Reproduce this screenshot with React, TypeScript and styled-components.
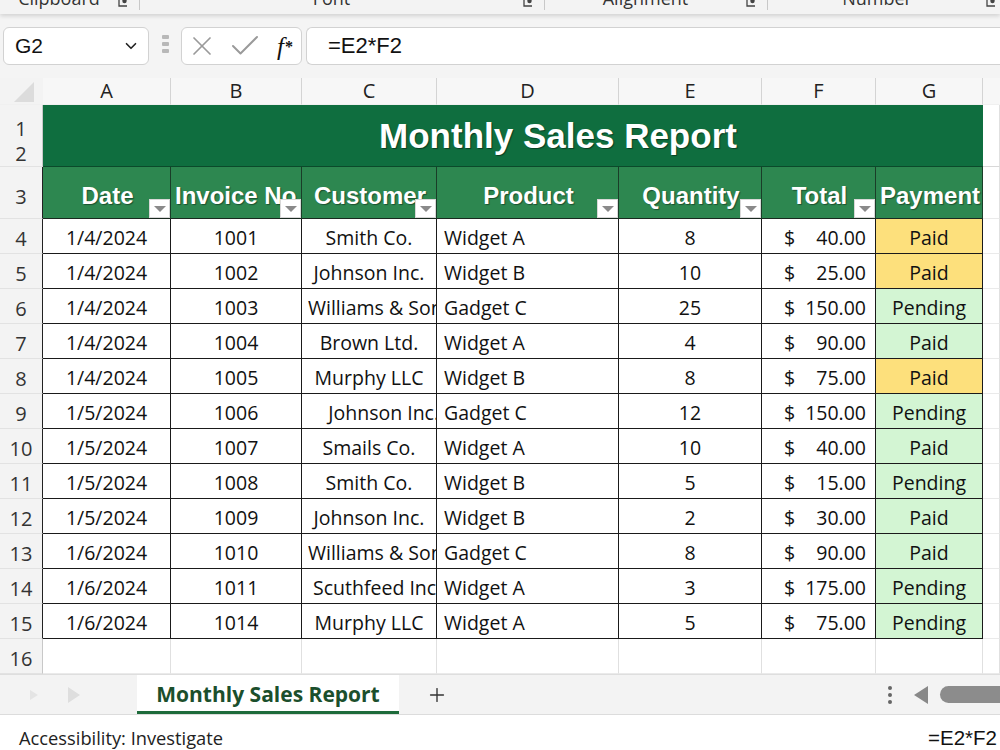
import React from 'react'
import styled, { createGlobalStyle } from 'styled-components'
import { X, Check, ChevronDown, Plus } from 'lucide-react'

const GlobalStyle = createGlobalStyle`
  html, body {
    margin: 0;
    padding: 0;
    background: #fff;
  }
  body {
    font-family: 'Open Sans', 'Noto Sans', sans-serif;
  }
`

const COLS = '43px 128px 131px 135px 182px 143px 114px 107px 1fr'

const Window = styled.div`
  width: 1000px;
  height: 750px;
  overflow: hidden;
  display: flex;
  flex-direction: column;
`

/* ribbon (only the group captions are visible) */
const Ribbon = styled.div`
  height: 14px;
  flex: none;
  display: flex;
  background: #f3f3f3;
  box-shadow: 0 2px 4px rgba(0, 0, 0, 0.14);
  position: relative;
  z-index: 2;
  overflow: hidden;
`

const Group = styled.div<{ $w: number }>`
  width: ${(p) => p.$w}px;
  flex: none;
  display: flex;
  align-items: flex-start;
  border-right: 1px solid #c8c8c8;
  box-sizing: border-box;
  height: 10px;
`

const GroupLabel = styled.span`
  flex: 1;
  text-align: center;
  font-size: 18px;
  line-height: 18px;
  margin-top: -11px;
  color: #333;
`

const Launcher = () => (
  <svg width="11" height="11" viewBox="0 0 11 11" style={{ margin: '-3px 10px 0 0' }}>
    <path d="M1 1v8h8" fill="none" stroke="#444" strokeWidth="1.3" />
    <circle cx="6.5" cy="4" r="2.2" fill="#444" />
  </svg>
)

/* formula bar */
const FormulaArea = styled.div`
  height: 64px;
  flex: none;
  background: #f4f4f4;
  display: flex;
  align-items: flex-start;
  padding-top: 13px;
  box-sizing: border-box;
`

const NameBox = styled.div`
  margin-left: 3px;
  width: 146px;
  height: 38px;
  box-sizing: border-box;
  background: #fff;
  border: 1px solid #d2d2d2;
  border-radius: 6px;
  display: flex;
  align-items: center;
  justify-content: space-between;
  padding: 0 8px 0 11px;
  font-family: 'Liberation Sans', Arial, sans-serif;
  font-size: 21px;
  color: #111;
`

const Grip = styled.div`
  width: 32px;
  display: flex;
  flex-direction: column;
  align-items: center;
  gap: 3px;
  padding-top: 8px;
  span {
    width: 7px;
    height: 4px;
    background: #b8b8b8;
    border-radius: 1px;
  }
`

const FxBox = styled.div`
  width: 121px;
  height: 38px;
  box-sizing: border-box;
  background: #fff;
  border: 1px solid #d2d2d2;
  border-radius: 6px;
  display: flex;
  align-items: center;
  padding: 0 8px 0 4px;
  gap: 9px;
  color: #9a9a9a;
`

const FxLabel = styled.span`
  margin-left: auto;
  font-family: 'Liberation Serif', 'Times New Roman', serif;
  font-style: italic;
  font-size: 25px;
  color: #111;
  line-height: 1;
  sub {
    font-size: 16px;
    vertical-align: 3px;
    font-style: normal;
    font-weight: 700;
    margin-left: 1px;
  }
`

const FormulaInput = styled.div`
  margin-left: 4px;
  flex: 1;
  height: 38px;
  box-sizing: border-box;
  background: #fff;
  border: 1px solid #d2d2d2;
  border-right: none;
  border-radius: 6px 0 0 6px;
  display: flex;
  align-items: center;
  padding-left: 21px;
  font-family: 'Liberation Sans', Arial, sans-serif;
  font-size: 22px;
  color: #111;
`

/* sheet grid */
const Row = styled.div<{ $h: number }>`
  display: grid;
  grid-template-columns: ${COLS};
  height: ${(p) => p.$h}px;
  flex: none;
`

const ColHead = styled.div<{ $sep?: boolean }>`
  background: #f7f7f7;
  display: flex;
  align-items: flex-end;
  justify-content: center;
  font-size: 20px;
  line-height: 26px;
  color: #222;
  border-right: 1px solid ${(p) => (p.$sep ? '#d4d4d4' : 'transparent')};
  border-bottom: 1px solid #f0f0f0;
  box-sizing: border-box;
  position: relative;
`

const Corner = styled(ColHead)`
  justify-content: flex-end;
  align-items: flex-end;
  padding: 0 8px 2px 0;
  background: #f3f3f3;
`

const RowHead = styled.div<{ $dark?: boolean; $top?: number }>`
  background: #f3f3f3;
  border-right: 1px solid ${(p) => (p.$dark ? '#222' : '#c8c8c8')};
  border-bottom: 1px solid #e2e2e2;
  box-sizing: border-box;
  display: flex;
  flex-direction: column;
  align-items: center;
  justify-content: center;
  padding-top: ${(p) => p.$top ?? 4}px;
  font-size: 20px;
  line-height: 25px;
  color: #333;
`

const Title = styled.div`
  grid-column: span 7;
  background: #0f6e3f;
  color: #fff;
  display: flex;
  align-items: center;
  justify-content: center;
  padding-left: 90px;
  font-family: 'Liberation Sans', Arial, sans-serif;
  font-weight: 700;
  font-size: 35px;
  text-shadow: 1px 1px 1px rgba(0, 0, 0, 0.45);
  border-bottom: 1px solid #0b4a2b;
  box-sizing: border-box;
`

const Blank = styled.div<{ $line?: boolean }>`
  background: #fff;
  border-right: 1px solid #e0e0e0;
  border-bottom: 1px solid ${(p) => (p.$line ? '#d8d8d8' : '#eaeaea')};
  box-sizing: border-box;
`

const HeadCell = styled.div`
  position: relative;
  background: #2d8750;
  color: #fff;
  border-right: 1px solid #1a3d28;
  border-bottom: 1px solid #1a2a20;
  box-sizing: border-box;
  display: flex;
  align-items: center;
  justify-content: center;
  padding: 6px 0 0 6px;
  overflow: hidden;
  white-space: nowrap;
  font-family: 'Liberation Sans', Arial, sans-serif;
  font-weight: 700;
  font-size: 24px;
  text-shadow: 1px 1px 1px rgba(0, 0, 0, 0.4);
`

const HeadText = styled.span`
  display: block;
  width: 100%;
  text-align: center;
  margin-left: -4px;
`

const FilterBtn = styled.div`
  position: absolute;
  right: 0;
  bottom: 0;
  width: 21px;
  height: 19px;
  background: #fff;
  border: 1px solid #d8d8d8;
  box-sizing: border-box;
  display: flex;
  align-items: center;
  justify-content: center;
  &::after {
    content: '';
    border-left: 6px solid transparent;
    border-right: 6px solid transparent;
    border-top: 6px solid #8a8a8a;
  }
`

type Align = 'left' | 'center' | 'right'

const Cell = styled.div<{ $align?: Align; $bg?: string }>`
  background: ${(p) => p.$bg ?? '#fff'};
  border-right: 1px solid #1a1a1a;
  border-bottom: 1px solid #1a1a1a;
  box-sizing: border-box;
  overflow: hidden;
  white-space: pre;
  text-align: ${(p) => p.$align ?? 'center'};
  padding: ${(p) => (p.$align === 'left' ? '2px 0 0 7px' : '2px 6px 0')};
  font-size: 19.5px;
  line-height: 33px;
  color: #111;
`

const MoneyCell = styled(Cell)`
  display: flex;
  justify-content: space-between;
  padding: 2px 9px 0 22px;
`

/* sheet tabs */
const TabBar = styled.div`
  height: 41px;
  flex: none;
  background: #f3f3f3;
  border-top: 1px solid #dedede;
  border-bottom: 1px solid #dcdcdc;
  box-sizing: border-box;
  display: flex;
  align-items: stretch;
`

const NavArrows = styled.div`
  width: 137px;
  display: flex;
  align-items: center;
  gap: 30px;
  padding-left: 30px;
  box-sizing: border-box;
`

const Tab = styled.div`
  width: 262px;
  background: #fff;
  display: flex;
  align-items: center;
  justify-content: center;
  font-weight: 700;
  font-size: 21px;
  color: #1b4f2c;
  border-bottom: 3px solid #1d6b3b;
  box-sizing: border-box;
  padding-top: 2px;
`

const AddTab = styled.div`
  width: 76px;
  display: flex;
  align-items: center;
  justify-content: center;
  color: #333;
`

const TabTools = styled.div`
  margin-left: auto;
  display: flex;
  align-items: center;
  gap: 12px;
`

const Dots = styled.div`
  display: flex;
  flex-direction: column;
  gap: 3px;
  span {
    width: 4px;
    height: 4px;
    border-radius: 50%;
    background: #666;
  }
`

const Thumb = styled.div`
  width: 70px;
  height: 17px;
  margin-right: -10px;
  background: #8c8c8c;
  border-radius: 9px;
`

/* status bar */
const StatusBar = styled.div`
  flex: 1;
  background: #fff;
  display: flex;
  align-items: flex-end;
  justify-content: space-between;
  padding: 0 3px 0 19px;
`

const StatusText = styled.span`
  font-size: 18.3px;
  line-height: 24px;
  color: #222;
`

const StatusFormula = styled.span`
  font-family: 'Liberation Sans', Arial, sans-serif;
  font-size: 20.5px;
  color: #111;
  line-height: 24px;
`

const columns = ['A', 'B', 'C', 'D', 'E', 'F', 'G']

const headers: { label: string; filter: boolean }[] = [
  { label: 'Date', filter: true },
  { label: 'Invoice No.', filter: true },
  { label: 'Customer', filter: true },
  { label: 'Product', filter: true },
  { label: 'Quantity', filter: true },
  { label: 'Total', filter: true },
  { label: 'Payment', filter: false },
]

const YELLOW = '#fde07c'
const GREEN = '#d3f5d3'

const rows = [
  ['1/4/2024', '1001', 'Smith Co.', 'Widget A', '8', '40.00', 'Paid', YELLOW],
  ['1/4/2024', '1002', 'Johnson Inc.', 'Widget B', '10', '25.00', 'Paid', YELLOW],
  ['1/4/2024', '1003', 'Williams & Sons', 'Gadget C', '25', '150.00', 'Pending', GREEN],
  ['1/4/2024', '1004', 'Brown Ltd.', 'Widget A', '4', '90.00', 'Paid', GREEN],
  ['1/4/2024', '1005', 'Murphy LLC', 'Widget B', '8', '75.00', 'Paid', YELLOW],
  ['1/5/2024', '1006', '    Johnson Inc.', 'Gadget C', '12', '150.00', 'Pending', GREEN],
  ['1/5/2024', '1007', 'Smails Co.', 'Widget A', '10', '40.00', 'Paid', GREEN],
  ['1/5/2024', '1008', 'Smith Co.', 'Widget B', '5', '15.00', 'Pending', GREEN],
  ['1/5/2024', '1009', 'Johnson Inc.', 'Widget B', '2', '30.00', 'Paid', GREEN],
  ['1/6/2024', '1010', 'Williams & Sons', 'Gadget C', '8', '90.00', 'Paid', GREEN],
  ['1/6/2024', '1011', ' Scuthfeed Inc.', 'Widget A', '3', '175.00', 'Pending', GREEN],
  ['1/6/2024', '1014', 'Murphy LLC', 'Widget A', '5', '75.00', 'Pending', GREEN],
]

export default function App() {
  return (
    <Window>
      <GlobalStyle />
      <Ribbon>
        <Group $w={140}>
          <GroupLabel>Clipboard</GroupLabel>
          <Launcher />
        </Group>
        <Group $w={405}>
          <GroupLabel>Font</GroupLabel>
          <Launcher />
        </Group>
        <Group $w={223}>
          <GroupLabel>Alignment</GroupLabel>
          <Launcher />
        </Group>
        <Group $w={240}>
          <GroupLabel>Number</GroupLabel>
          <Launcher />
        </Group>
      </Ribbon>

      <FormulaArea>
        <NameBox>
          G2
          <ChevronDown size={18} strokeWidth={2.2} color="#222" />
        </NameBox>
        <Grip>
          <span />
          <span />
          <span />
        </Grip>
        <FxBox>
          <X size={32} strokeWidth={1.3} />
          <Check size={36} strokeWidth={1.3} />
          <FxLabel>
            f<sub>*</sub>
          </FxLabel>
        </FxBox>
        <FormulaInput>=E2*F2</FormulaInput>
      </FormulaArea>

      <Row $h={27}>
        <Corner>
          <svg width="20" height="20" viewBox="0 0 20 20">
            <polygon points="20,0 20,20 0,20" fill="#dcdcdc" />
          </svg>
        </Corner>
        {columns.map((c) => (
          <ColHead key={c} $sep>
            {c}
          </ColHead>
        ))}
        <ColHead />
      </Row>

      <Row $h={62}>
        <RowHead $top={10}>
          <span>1</span>
          <span>2</span>
        </RowHead>
        <Title>Monthly Sales Report</Title>
        <Blank $line />
      </Row>

      <Row $h={52}>
        <RowHead $dark $top={8}>3</RowHead>
        {headers.map((h) => (
          <HeadCell key={h.label}>
            <HeadText>{h.label}</HeadText>
            {h.filter && <FilterBtn />}
          </HeadCell>
        ))}
        <Blank />
      </Row>

      {rows.map((r, i) => (
        <Row $h={35} key={i}>
          <RowHead $dark>{i + 4}</RowHead>
          <Cell>{r[0]}</Cell>
          <Cell>{r[1]}</Cell>
          <Cell>{r[2]}</Cell>
          <Cell $align="left">{r[3]}</Cell>
          <Cell>{r[4]}</Cell>
          <MoneyCell>
            <span>$</span>
            <span>{r[5]}</span>
          </MoneyCell>
          <Cell $bg={r[7]}>{r[6]}</Cell>
          <Blank />
        </Row>
      ))}

      <Row $h={35}>
        <RowHead>16</RowHead>
        {columns.map((c) => (
          <Blank key={c} />
        ))}
        <Blank />
      </Row>

      <TabBar>
        <NavArrows>
          <svg width="8" height="10" viewBox="0 0 8 10">
            <polygon points="0,0 8,5 0,10" fill="#e4e4e4" />
          </svg>
          <svg width="12" height="16" viewBox="0 0 12 16">
            <polygon points="0,0 12,8 0,16" fill="#dedede" />
          </svg>
        </NavArrows>
        <Tab>Monthly Sales Report</Tab>
        <AddTab>
          <Plus size={22} strokeWidth={1.5} />
        </AddTab>
        <TabTools>
          <Dots>
            <span />
            <span />
            <span />
          </Dots>
          <svg width="14" height="18" viewBox="0 0 14 18" style={{ marginLeft: 10 }}>
            <polygon points="14,0 14,18 0,9" fill="#888" />
          </svg>
          <Thumb />
        </TabTools>
      </TabBar>

      <StatusBar>
        <StatusText>Accessibility: Investigate</StatusText>
        <StatusFormula>=E2*F2</StatusFormula>
      </StatusBar>
    </Window>
  )
}
